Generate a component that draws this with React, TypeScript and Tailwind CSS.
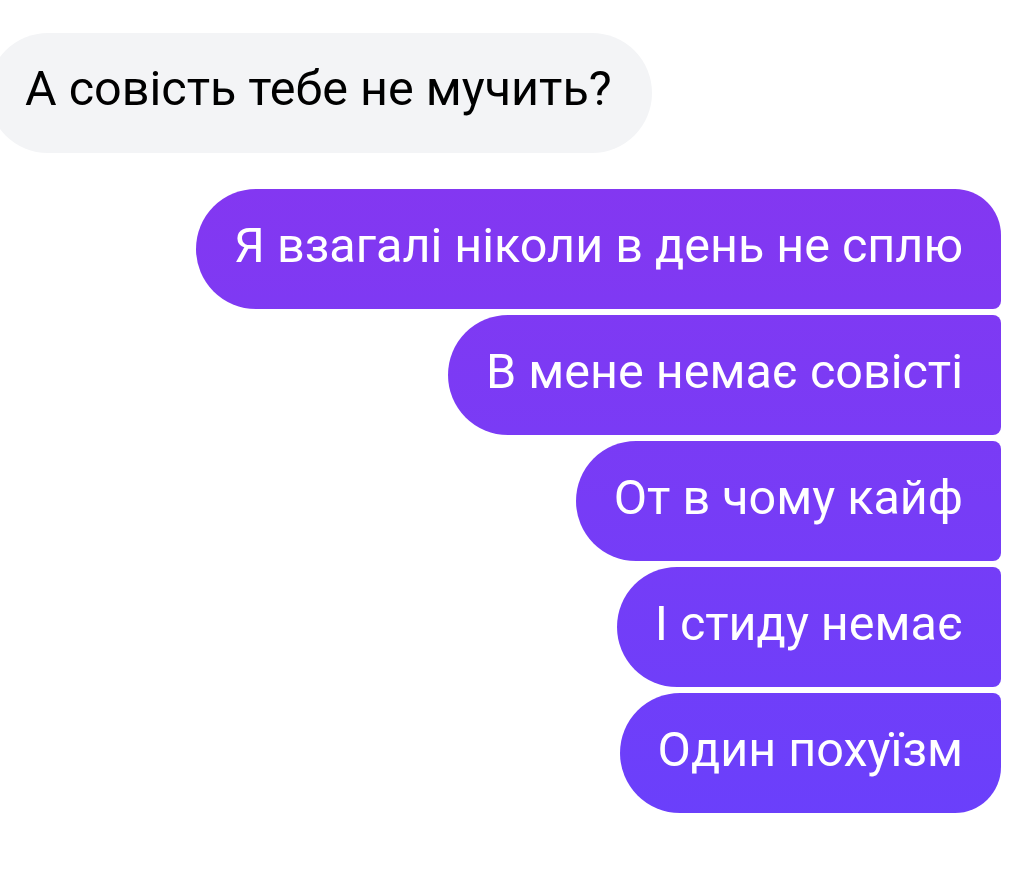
const outgoing = [
  "Я взагалі ніколи в день не сплю",
  "В мене немає совісті",
  "От в чому кайф",
  "І стиду немає",
  "Один похуїзм",
];

function cornerClass(i: number, n: number) {
  if (i === 0) return "rounded-l-[60px] rounded-tr-[46px] rounded-br-[8px]";
  if (i === n - 1) return "rounded-l-[60px] rounded-tr-[8px] rounded-br-[46px]";
  return "rounded-l-[60px] rounded-r-[8px]";
}

export default function App() {
  return (
    <div className="h-[872px] w-[1025px] overflow-hidden bg-white font-['Roboto','Noto_Sans',sans-serif]">
      <div className="flex flex-col pt-[33px]">
        <div className="ml-[-12px] flex h-[120px] w-fit items-center rounded-full bg-[#f3f4f6] pb-[8px] pl-[37px] pr-[40px]">
          <span className="text-[48.5px] leading-none text-black">А совість тебе не мучить?</span>
        </div>

        <div className="mt-[36px] flex flex-col items-end gap-[6px] pr-[24px]">
          {outgoing.map((text, i) => (
            <div
              key={text}
              className={`flex h-[120px] items-center bg-gradient-to-b from-[#8a34ee] to-[#6840fc] bg-fixed pb-[6px] pl-[38px] pr-[38px] ${cornerClass(i, outgoing.length)}`}
            >
              <span className="text-[48.5px] leading-none text-white">{text}</span>
            </div>
          ))}
        </div>
      </div>
    </div>
  );
}
